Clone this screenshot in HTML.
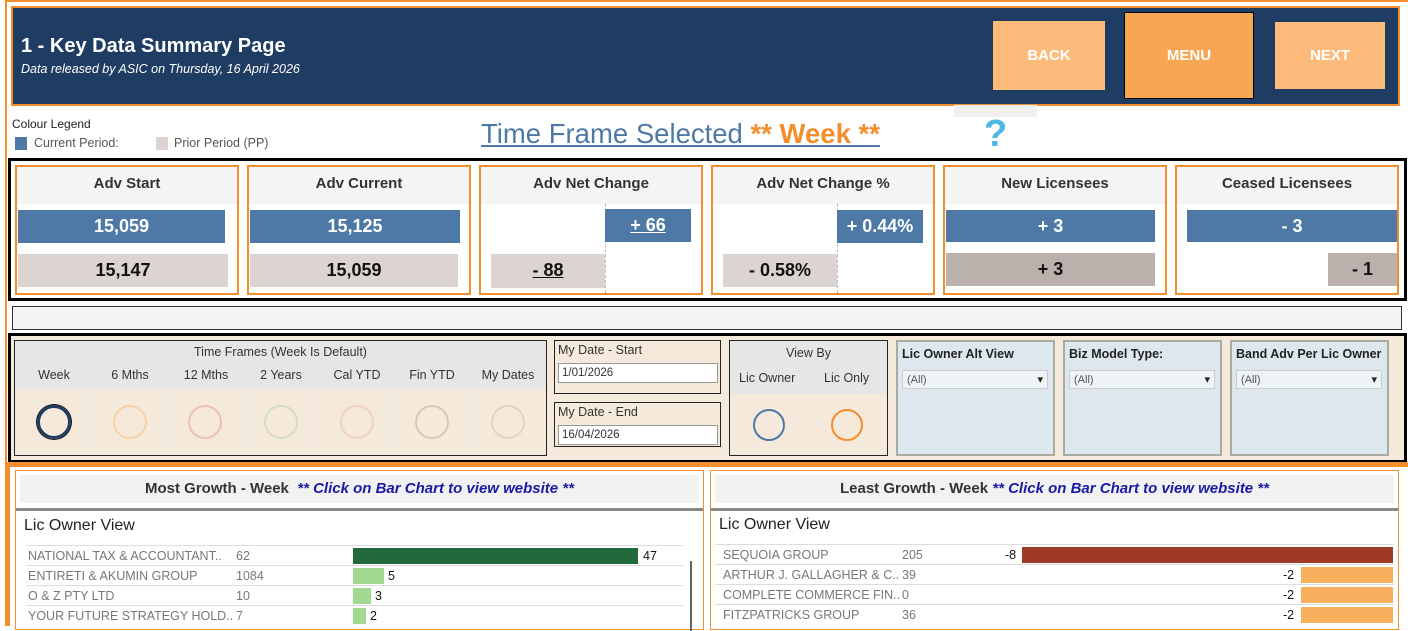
<!DOCTYPE html><html><head><style>
*{margin:0;padding:0;box-sizing:border-box}
body{width:1408px;height:626px;overflow:hidden;background:#fff;font-family:"Liberation Sans",sans-serif;position:relative;color:#333}
div,span{position:absolute}
.c{text-align:center}
.card{border:2px solid #f28e2b;background:#fff}
.ch{left:0;right:0;top:0;height:37px;background:#f4f4f4;font-weight:bold;font-size:15px;text-align:center;line-height:34px;color:#333}
.bar{color:#fff;font-weight:bold;font-size:18px;text-align:center;line-height:32px}
.b{background:#4e79a7}.g{background:#dcd4d0;color:#111}.g2{background:#bab1ac;color:#111}
.tf{font-size:12.5px;color:#333;top:27px;width:76px;text-align:center}
.circ{width:34px;height:34px;border-radius:50%;border:2px solid}
.dd{background:#dde8ee;border:2px solid #a9aba0}
.ddl{left:4px;top:5px;font-weight:bold;font-size:12.5px;color:#222}
.sel{left:4px;top:28px;right:5px;height:19px;background:#eef3f5;border:1px solid #ccc;font-size:11px;color:#555;padding:3px 0 0 4px}
.sel:after{content:"▾";position:absolute;right:4px;top:2px;color:#222;font-size:11px}
.row{left:10px;right:14px;height:20px;border-top:1px solid #ddd;font-size:12.5px;color:#777}
.row span{top:3px}
.gh{left:4px;right:4px;top:4px;height:28px;background:#f2f2f2;font-weight:bold;font-size:15px;text-align:center;line-height:28px;color:#333}
.gh i{color:#1a1aa6}
.sep{top:48px;bottom:0;width:4px;background:#f0ebe3}
</style></head><body>
<div style="left:5px;top:0;width:1403px;height:626px;border:2px solid #f28e2b;border-bottom:none;border-right:none"></div>
<div style="left:11px;top:6px;width:1389px;height:100px;background:#1f3d63;border:2px solid #f28e2b"></div>
<div style="left:21px;top:35px;color:#fff;font-weight:bold;font-size:20px">1 - Key Data Summary Page</div>
<div style="left:21px;top:62px;color:#fff;font-style:italic;font-size:12.5px">Data released by ASIC on Thursday, 16 April 2026</div>
<div class="c" style="left:993px;top:21px;width:112px;height:69px;background:#fdbb7b;color:#fff;font-weight:bold;font-size:15px;line-height:69px">BACK</div>
<div class="c" style="left:1124px;top:12px;width:130px;height:87px;background:#f7a654;border:1px solid #000;color:#fff;font-weight:bold;font-size:15px;line-height:85px">MENU</div>
<div class="c" style="left:1275px;top:22px;width:110px;height:67px;background:#fdbb7b;color:#fff;font-weight:bold;font-size:15px;line-height:67px">NEXT</div>
<div style="left:954px;top:105px;width:83px;height:12px;background:#f0f0f0"></div>
<div style="left:12px;top:117px;font-size:12px;color:#222">Colour Legend</div>
<div style="left:15px;top:137px;width:12px;height:13px;background:#4e79a7"></div>
<div style="left:34px;top:136px;font-size:12.5px;color:#555">Current Period:</div>
<div style="left:156px;top:137px;width:12px;height:13px;background:#dcd4d0"></div>
<div style="left:174px;top:136px;font-size:12.5px;color:#555">Prior Period (PP)</div>
<div style="left:481px;top:118px;font-size:27.5px;color:#4e79a7;text-decoration:underline;white-space:pre">Time Frame Selected <span style="position:static;color:#f28e2b;font-weight:bold">** Week **</span></div>
<div style="left:984px;top:113px;font-size:38px;font-weight:bold;color:#4fb8e3">?</div>

<div style="left:8px;top:158px;width:1399px;height:143px;border:3px solid #000"></div>
<div class="card" style="left:15px;top:165px;width:224px;height:130px"><div class="ch">Adv Start</div>
<div class="bar b" style="left:1px;top:43px;width:207px;height:33px">15,059</div>
<div class="bar g" style="left:1px;top:87px;width:210px;height:33px">15,147</div></div>
<div class="card" style="left:247px;top:165px;width:224px;height:130px"><div class="ch">Adv Current</div>
<div class="bar b" style="left:1px;top:43px;width:210px;height:33px">15,125</div>
<div class="bar g" style="left:1px;top:87px;width:208px;height:33px">15,059</div></div>
<div class="card" style="left:479px;top:165px;width:224px;height:130px"><div class="ch">Adv Net Change</div>
<div style="left:124px;top:37px;height:89px;border-left:1px dashed #bbb"></div>
<div class="bar b" style="left:124px;top:42px;width:86px;height:33px;text-decoration:underline">+ 66</div>
<div class="bar g" style="left:10px;top:87px;width:114px;height:34px;text-decoration:underline">- 88</div></div>
<div class="card" style="left:711px;top:165px;width:224px;height:130px"><div class="ch">Adv Net Change %</div>
<div style="left:124px;top:37px;height:89px;border-left:1px dashed #bbb"></div>
<div class="bar b" style="left:124px;top:43px;width:86px;height:33px">+ 0.44%</div>
<div class="bar g" style="left:10px;top:87px;width:114px;height:33px">- 0.58%</div></div>
<div class="card" style="left:943px;top:165px;width:224px;height:130px"><div class="ch">New Licensees</div>
<div class="bar b" style="left:1px;top:43px;width:209px;height:32px">+ 3</div>
<div class="bar g2" style="left:1px;top:86px;width:209px;height:33px">+ 3</div></div>
<div class="card" style="left:1175px;top:165px;width:224px;height:130px"><div class="ch">Ceased Licensees</div>
<div class="bar b" style="left:10px;top:43px;width:210px;height:32px">- 3</div>
<div class="bar g2" style="left:151px;top:86px;width:69px;height:33px">- 1</div></div>

<div style="left:12px;top:306px;width:1390px;height:24px;background:#f4f4f4;border:1px solid #333"></div>

<div style="left:8px;top:333px;width:1399px;height:130px;border:3px solid #000;background:#f4e9da"></div>
<div style="left:14px;top:340px;width:533px;height:116px;border:1px solid #222;background:#f4e9da">
<div style="left:0;right:0;top:0;height:48px;background:#e6e6e6"></div>
<div class="sep" style="left:74px"></div><div class="sep" style="left:150px"></div><div class="sep" style="left:226px"></div><div class="sep" style="left:302px"></div><div class="sep" style="left:378px"></div><div class="sep" style="left:454px"></div>
<div class="c" style="left:0;right:0;top:4px;font-size:12.5px">Time Frames (Week Is Default)</div>
<div class="tf" style="left:1px">Week</div><div class="tf" style="left:77px">6 Mths</div><div class="tf" style="left:153px">12 Mths</div><div class="tf" style="left:228px">2 Years</div><div class="tf" style="left:304px">Cal YTD</div><div class="tf" style="left:379px">Fin YTD</div><div class="tf" style="left:455px">My Dates</div>
<div class="circ" style="left:22px;top:64px;border:3px solid #1f3d63;box-shadow:0 0 0 1px #111"></div>
<div class="circ" style="left:98px;top:64px;border-color:#f8d1a5"></div>
<div class="circ" style="left:173px;top:64px;border-color:#ecc0b6"></div>
<div class="circ" style="left:249px;top:64px;border-color:#d4dcc6"></div>
<div class="circ" style="left:325px;top:64px;border-color:#f2cfc1"></div>
<div class="circ" style="left:400px;top:64px;border-color:#d6c8b7"></div>
<div class="circ" style="left:476px;top:64px;border-color:#e2d2c4"></div>
</div>
<div style="left:554px;top:340px;width:167px;height:54px;border:1px solid #222;background:#f4e9da"><div style="left:3px;top:2px;font-size:12.5px">My Date - Start</div><div style="left:3px;top:22px;width:160px;height:20px;background:#fff;border:1px solid #999;font-size:11.5px;padding:3px">1/01/2026</div></div>
<div style="left:554px;top:402px;width:167px;height:45px;border:1px solid #222;background:#f4e9da"><div style="left:3px;top:2px;font-size:12.5px">My Date - End</div><div style="left:3px;top:22px;width:160px;height:20px;background:#fff;border:1px solid #999;font-size:11.5px;padding:3px">16/04/2026</div></div>
<div style="left:729px;top:340px;width:159px;height:116px;border:1px solid #222;background:#f4e9da">
<div style="left:0;right:0;top:0;height:53px;background:#e6e6e6"></div>
<div class="c" style="left:0;right:0;top:5px;font-size:12.5px">View By</div>
<div style="left:9px;top:30px;font-size:12.5px">Lic Owner</div><div style="left:94px;top:30px;font-size:12.5px">Lic Only</div>
<div class="circ" style="left:23px;top:68px;width:32px;height:32px;border-color:#4e79a7"></div>
<div class="circ" style="left:101px;top:68px;width:32px;height:32px;border-color:#f28e2b"></div></div>
<div class="dd" style="left:896px;top:340px;width:159px;height:116px"><div class="ddl">Lic Owner Alt View</div><div class="sel">(All)</div></div>
<div class="dd" style="left:1063px;top:340px;width:159px;height:116px"><div class="ddl">Biz Model Type:</div><div class="sel">(All)</div></div>
<div class="dd" style="left:1230px;top:340px;width:159px;height:116px"><div class="ddl">Band Adv Per Lic Owner</div><div class="sel">(All)</div></div>

<div style="left:5px;top:462px;width:1403px;height:5px;background:#f28e2b"></div>
<div style="left:5px;top:462px;width:5px;height:164px;background:#f28e2b"></div>

<div style="left:15px;top:470px;width:689px;height:160px;border:1px solid #f28e2b">
<div class="gh">Most Growth - Week &nbsp;<i>** Click on Bar Chart to view website **</i></div>
<div style="left:0;right:0;top:37px;height:3px;background:#888"></div>
<div style="left:8px;top:46px;font-size:16px;color:#222">Lic Owner View</div>
<div style="left:674px;top:90px;width:2px;height:70px;background:#666"></div>
<div class="row" style="top:74px;right:20px"><span style="left:2px">NATIONAL TAX &amp; ACCOUNTANT..</span><span style="left:210px">62</span><span style="left:327px;top:2px;width:285px;height:16px;background:#226a3c"></span><span style="left:617px;color:#111">47</span></div>
<div class="row" style="top:94px;right:20px"><span style="left:2px">ENTIRETI &amp; AKUMIN GROUP</span><span style="left:210px">1084</span><span style="left:327px;top:2px;width:31px;height:16px;background:#a0d98f"></span><span style="left:362px;color:#111">5</span></div>
<div class="row" style="top:114px;right:20px"><span style="left:2px">O &amp; Z PTY LTD</span><span style="left:210px">10</span><span style="left:327px;top:2px;width:18px;height:16px;background:#a0d98f"></span><span style="left:349px;color:#111">3</span></div>
<div class="row" style="top:134px;right:20px"><span style="left:2px">YOUR FUTURE STRATEGY HOLD..</span><span style="left:210px">7</span><span style="left:327px;top:2px;width:13px;height:16px;background:#a0d98f"></span><span style="left:344px;color:#111">2</span></div>
</div>
<div style="left:710px;top:470px;width:689px;height:160px;border:1px solid #f28e2b">
<div class="gh">Least Growth - Week <i>** Click on Bar Chart to view website **</i></div>
<div style="left:0;right:0;top:37px;height:3px;background:#888"></div>
<div style="left:8px;top:45px;font-size:16px;color:#222">Lic Owner View</div>
<div class="row" style="top:73px;left:4px;right:4px"><span style="left:8px">SEQUOIA GROUP</span><span style="left:187px">205</span><span style="left:290px;color:#111">-8</span><span style="left:307px;top:2px;width:371px;height:16px;background:#a03a24"></span></div>
<div class="row" style="top:93px;left:4px;right:4px"><span style="left:8px">ARTHUR J. GALLAGHER &amp; C..</span><span style="left:187px">39</span><span style="left:568px;color:#111">-2</span><span style="left:586px;top:2px;width:92px;height:16px;background:#f7b05e"></span></div>
<div class="row" style="top:113px;left:4px;right:4px"><span style="left:8px">COMPLETE COMMERCE FIN..</span><span style="left:187px">0</span><span style="left:568px;color:#111">-2</span><span style="left:586px;top:2px;width:92px;height:16px;background:#f7b05e"></span></div>
<div class="row" style="top:133px;left:4px;right:4px"><span style="left:8px">FITZPATRICKS GROUP</span><span style="left:187px">36</span><span style="left:568px;color:#111">-2</span><span style="left:586px;top:2px;width:92px;height:16px;background:#f7b05e"></span></div>
</div>
</body></html>
